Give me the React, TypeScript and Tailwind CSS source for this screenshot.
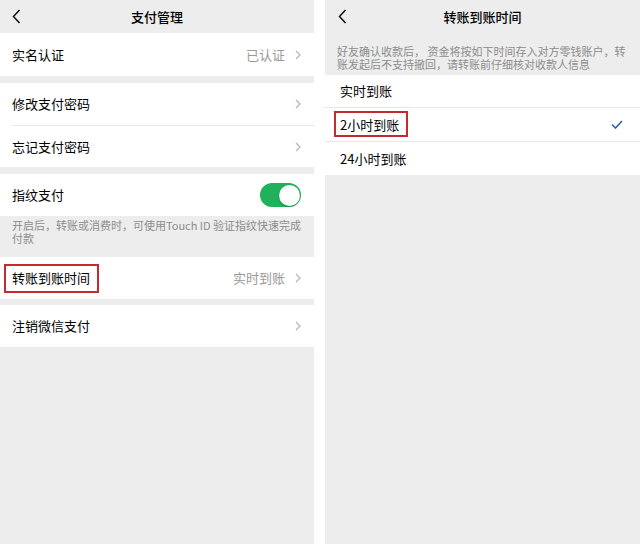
import React from "react";

const font = { fontFamily: '"Noto Sans CJK SC", "Noto Sans", sans-serif' };

function Back() {
  return (
    <svg width="9" height="15" viewBox="0 0 9 15" className="absolute left-[12px] top-[9px]">
      <polyline points="7.5,1 1.5,7.5 7.5,14" fill="none" stroke="#111" strokeWidth="1.5" />
    </svg>
  );
}

function Chevron() {
  return (
    <svg width="6" height="10" viewBox="0 0 6 10" className="ml-[10px]">
      <polyline points="1,1 5,5 1,9" fill="none" stroke="#b5b5b5" strokeWidth="1.2" />
    </svg>
  );
}

function Row({
  label,
  value,
  h = "h-[42px]",
  children,
  boxed,
}: {
  label: string;
  value?: string;
  h?: string;
  children?: React.ReactNode;
  boxed?: boolean;
}) {
  return (
    <div className={`relative flex ${h} items-center bg-white pl-[12px] pr-[13px]`}>
      <span className="text-[13px] text-[#000]">{label}</span>
      <div className="ml-auto flex items-center">
        {value && <span className="text-[13px] text-[#999]">{value}</span>}
        {children ?? <Chevron />}
      </div>
      {boxed && (
        <div className="absolute left-[4px] top-[7px] h-[29px] w-[95px] border-2 border-[#c52a30]" />
      )}
    </div>
  );
}

export default function App() {
  return (
    <div className="flex h-[544px] w-[640px] bg-white" style={font}>
      {/* Left panel */}
      <div className="flex w-[314px] flex-col bg-[#ededed]">
        <div className="relative flex h-[33px] items-center justify-center">
          <Back />
          <span className="text-[13px] font-medium text-[#000]">支付管理</span>
        </div>
        <Row label="实名认证" value="已认证" h="h-[43px]" />
        <div className="h-[7px]" />
        <Row label="修改支付密码" />
        <div className="bg-white pl-[12px]">
          <div className="h-px bg-[#e6e6e6]" />
        </div>
        <Row label="忘记支付密码" h="h-[41px]" />
        <div className="h-[7px]" />
        <Row label="指纹支付">
          <div className="relative h-[24px] w-[41px] rounded-full bg-[#1fb25a]">
            <div className="absolute right-[1.5px] top-[1.5px] h-[21px] w-[21px] rounded-full bg-white shadow-[0_1px_2px_rgba(0,0,0,0.25)]" />
          </div>
        </Row>
        <div className="h-[41px] px-[12px] pt-[3px] text-[11px] leading-[13px] text-[#8c8c8c]">
          开启后，转账或消费时，可使用Touch ID 验证指纹快速完成付款
        </div>
        <Row label="转账到账时间" value="实时到账" boxed />
        <div className="h-[6px]" />
        <Row label="注销微信支付" />
      </div>

      <div className="w-[11px]" />

      {/* Right panel */}
      <div className="flex w-[315px] flex-col bg-[#ededed]">
        <div className="relative flex h-[33px] items-center justify-center">
          <svg width="9" height="15" viewBox="0 0 9 15" className="absolute left-[13px] top-[9px]">
            <polyline points="7.5,1 1.5,7.5 7.5,14" fill="none" stroke="#111" strokeWidth="1.5" />
          </svg>
          <span className="text-[13px] font-medium text-[#000]">转账到账时间</span>
        </div>
        <div className="h-[42px] pl-[12px] pr-[14px] pt-[12px] text-[11px] leading-[13px] text-[#8c8c8c]">
          好友确认收款后， 资金将按如下时间存入对方零钱账户，转账发起后不支持撤回，请转账前仔细核对收款人信息
        </div>
        <div className="flex h-[32px] items-center bg-white pl-[15px] text-[13px] text-[#000]">
          实时到账
        </div>
        <div className="h-px bg-[#e8e8e8]" />
        <div className="relative flex h-[33px] items-center bg-white pl-[15px] pr-[17px] text-[13px] text-[#000]">
          <span>2小时到账</span>
          <svg width="12" height="9" viewBox="0 0 12 9" className="ml-auto">
            <polyline points="1,4.5 4.5,8 11,1" fill="none" stroke="#2f5fa8" strokeWidth="1.6" />
          </svg>
          <div className="absolute left-[9px] top-[3px] h-[26px] w-[74px] border-2 border-[#c52a30]" />
        </div>
        <div className="h-px bg-[#e8e8e8]" />
        <div className="flex h-[33px] items-center bg-white pl-[15px] text-[13px] text-[#000]">
          24小时到账
        </div>
      </div>
    </div>
  );
}
